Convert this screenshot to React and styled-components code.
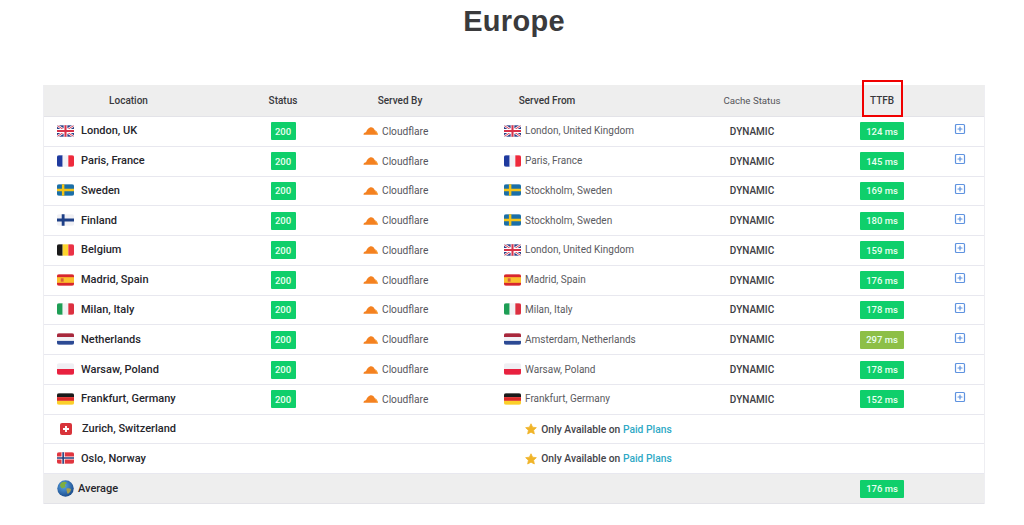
import styled, { createGlobalStyle } from 'styled-components'
import { SquarePlus } from 'lucide-react'

const GlobalStyle = createGlobalStyle`
  html, body { margin: 0; padding: 0; background: #fff; }
  body { font-family: Roboto, "Noto Sans", "Liberation Sans", sans-serif; color: #3c3c40; }
`

const Page = styled.div`
  width: 1024px;
  height: 525px;
  overflow: hidden;
  padding: 0 39px 0 43px;
  box-sizing: border-box;
`

const Title = styled.h1`
  margin: 0;
  height: 85px;
  padding: 3px 0 0 0;
  box-sizing: border-box;
  text-align: center;
  font-family: "Liberation Sans", Arial, sans-serif;
  font-size: 29px;
  line-height: 36px;
  font-weight: 700;
  letter-spacing: 0.3px;
  color: #3a3a3c;
`

const Table = styled.div`
  width: 942px;
  border-left: 1px solid #eeeef2;
  border-right: 1px solid #eeeef2;
  box-sizing: border-box;
`

const Row = styled.div`
  display: grid;
  grid-template-columns: 169px 140px 94px 200px 210px 50px 77px;
  align-items: center;
  height: ${p => p.$h || 29.77}px;
  box-sizing: border-box;
  border-bottom: 1.5px solid ${p => p.$shade ? '#e3e3e8' : '#e8e8ef'};
  background: ${p => p.$shade ? '#eeeeee' : '#fff'};
`

const HeadCell = styled.div`
  position: relative;
  text-align: center;
  font-size: ${p => p.$light ? 9.7 : 10}px;
  font-weight: ${p => p.$light ? 400 : 500};
  color: ${p => p.$light ? '#55555a' : '#38383c'};
`

const Highlight = styled.div`
  position: absolute;
  left: 5px;
  top: -15px;
  width: 41px;
  height: 37px;
  border: 2px solid #f00000;
  box-sizing: border-box;
`

const LocationCell = styled.div`
  display: flex;
  align-items: center;
  gap: ${p => p.$gap || 7}px;
  padding: 0 0 1px ${p => p.$pad || 13}px;
  font-size: 11px;
  font-weight: 500;
  color: #26262c;
  white-space: nowrap;
`

const Centered = styled.div`
  display: flex;
  align-items: center;
  justify-content: center;
`

const Badge = styled.span`
  display: flex;
  align-items: center;
  justify-content: center;
  width: ${p => p.$wide ? 44 : 25}px;
  height: 18px;
  border-radius: 1px;
  background: ${p => p.$slow ? '#8dbf47' : '#0fcf6b'};
  color: #eafff1;
  font-size: 9.5px;
  font-weight: 500;
`

const ServedBy = styled.div`
  display: flex;
  align-items: center;
  gap: 4px;
  padding-left: 10px;
  font-size: 10.2px;
  color: #55555c;
`

const ServedFrom = styled.div`
  display: flex;
  align-items: center;
  gap: 4px;
  padding: 0 0 1px 57px;
  font-size: 10px;
  color: #5a5a60;
  white-space: nowrap;
`

const Cache = styled.div`
  text-align: center;
  font-size: 10px;
  font-weight: 500;
  color: #3c3c42;
`

const Expand = styled.div`
  display: flex;
  justify-content: flex-end;
  padding: 0 18px 4px 0;
  color: #5f93e0;
`

const Notice = styled.div`
  grid-column: 2 / -1;
  display: flex;
  align-items: center;
  justify-content: center;
  gap: 4px;
  font-size: 10.3px;
  font-weight: 500;
  color: #44444a;
`

const PaidLink = styled.a`
  color: #2fa9c6;
`

const Svg = styled.svg`
  flex: none;
  display: block;
  border-radius: 2px;
`

const Flag = ({ children, w = 17, h = 12 }) => (
  <Svg width={w} height={h} viewBox="0 0 18 12">{children}</Svg>
)

const flags = {
  uk: (
    <Flag>
      <rect width="18" height="12" fill="#2b3f86" />
      <path d="M0 0L18 12M18 0L0 12" stroke="#fff" strokeWidth="2.6" />
      <path d="M0 0L18 12M18 0L0 12" stroke="#d8324a" strokeWidth="1" />
      <path d="M9 0V12M0 6H18" stroke="#fff" strokeWidth="4" />
      <path d="M9 0V12M0 6H18" stroke="#d8324a" strokeWidth="2.2" />
    </Flag>
  ),
  fr: (
    <Flag>
      <rect width="6" height="12" fill="#1f3a9e" />
      <rect x="6" width="6" height="12" fill="#f2f2f6" />
      <rect x="12" width="6" height="12" fill="#ee2a3c" />
    </Flag>
  ),
  se: (
    <Flag>
      <rect width="18" height="12" fill="#1b6fa8" />
      <path d="M6.5 0V12M0 6H18" stroke="#f5c518" strokeWidth="2.6" />
    </Flag>
  ),
  fi: (
    <Flag>
      <rect width="18" height="12" fill="#f0f0f4" />
      <path d="M6.5 0V12M0 6H18" stroke="#1d3f86" strokeWidth="3" />
    </Flag>
  ),
  be: (
    <Flag>
      <rect width="6" height="12" fill="#1a1a1a" />
      <rect x="6" width="6" height="12" fill="#fbd52e" />
      <rect x="12" width="6" height="12" fill="#ea3245" />
    </Flag>
  ),
  es: (
    <Flag>
      <rect width="18" height="12" fill="#d8262e" />
      <rect y="3" width="18" height="6" fill="#fbc02d" />
      <rect x="4" y="4.2" width="3" height="3.6" fill="#d9603a" />
    </Flag>
  ),
  it: (
    <Flag>
      <rect width="6" height="12" fill="#1e9e55" />
      <rect x="6" width="6" height="12" fill="#f2f2f4" />
      <rect x="12" width="6" height="12" fill="#dc3040" />
    </Flag>
  ),
  nl: (
    <Flag>
      <rect width="18" height="4" fill="#a8283c" />
      <rect y="4" width="18" height="4" fill="#f2f2f6" />
      <rect y="8" width="18" height="4" fill="#2c4a94" />
    </Flag>
  ),
  pl: (
    <Flag>
      <rect width="18" height="6" fill="#efeff3" />
      <rect y="6" width="18" height="6" fill="#e8213f" />
    </Flag>
  ),
  de: (
    <Flag>
      <rect width="18" height="4" fill="#1a1a1a" />
      <rect y="4" width="18" height="4" fill="#dc2a2a" />
      <rect y="8" width="18" height="4" fill="#fbcf2a" />
    </Flag>
  ),
  ch: (
    <Svg width="12" height="12" viewBox="0 0 12 12">
      <rect width="12" height="12" fill="#d8333a" />
      <path d="M6 3V9M3 6H9" stroke="#fff" strokeWidth="1.9" />
    </Svg>
  ),
  no: (
    <Flag>
      <rect width="18" height="12" fill="#e0353f" />
      <path d="M6.5 0V12M0 6H18" stroke="#fff" strokeWidth="3.4" />
      <path d="M6.5 0V12M0 6H18" stroke="#23407f" strokeWidth="1.7" />
    </Flag>
  ),
}

const Cloud = () => (
  <svg width="15" height="8" viewBox="0 0 30 16">
    <path d="M1 15.500c0-3 2-5 5-5.200C8 6 10 2 14 1c4-1 8 1 9.500 5.500 3.300.4 5.800 4.500 6.200 9H1z" fill="#f48120" />
    <path d="M24 9c2.500 0 4.300 3 5 6.500" stroke="#fbad41" strokeWidth="2" fill="none" />
  </svg>
)

const Star = () => (
  <svg width="12" height="12" viewBox="0 0 24 24">
    <path d="M12 1.500l3.200 6.900 7.500.9-5.500 5.200 1.500 7.500L12 18.300l-6.700 3.700 1.500-7.500L1.300 9.300l7.500-.9z" fill="#f0b429" stroke="#f0b429" strokeWidth="1.500" strokeLinejoin="round" />
  </svg>
)

const Globe = () => (
  <svg width="17" height="17" viewBox="0 0 34 34">
    <defs>
      <radialGradient id="sea" cx="0.4" cy="0.35" r="0.75">
        <stop offset="0" stopColor="#5aa6e8" />
        <stop offset="1" stopColor="#13407f" />
      </radialGradient>
    </defs>
    <circle cx="17" cy="17" r="16.500" fill="url(#sea)" />
    <path d="M9 5c4-2 8-2 10 0 1 2-1 3-3 4-1 2 2 3 1 5-2 2-5 1-6 3-2-1-4-3-5-6 0-2 1-4 3-6z" fill="#7fae3f" />
    <path d="M19 17c3-1 7-1 9 1 0 3-2 7-5 9-2 1-3-1-3-3 0-2-2-4-1-7z" fill="#a6a04a" />
  </svg>
)

const rows = [
  { name: 'London, UK', flag: 'uk', from: 'London, United Kingdom', fromFlag: 'uk', ttfb: 124 },
  { name: 'Paris, France', flag: 'fr', from: 'Paris, France', fromFlag: 'fr', ttfb: 145 },
  { name: 'Sweden', flag: 'se', from: 'Stockholm, Sweden', fromFlag: 'se', ttfb: 169 },
  { name: 'Finland', flag: 'fi', from: 'Stockholm, Sweden', fromFlag: 'se', ttfb: 180 },
  { name: 'Belgium', flag: 'be', from: 'London, United Kingdom', fromFlag: 'uk', ttfb: 159 },
  { name: 'Madrid, Spain', flag: 'es', from: 'Madrid, Spain', fromFlag: 'es', ttfb: 176 },
  { name: 'Milan, Italy', flag: 'it', from: 'Milan, Italy', fromFlag: 'it', ttfb: 178 },
  { name: 'Netherlands', flag: 'nl', from: 'Amsterdam, Netherlands', fromFlag: 'nl', ttfb: 297, slow: true },
  { name: 'Warsaw, Poland', flag: 'pl', from: 'Warsaw, Poland', fromFlag: 'pl', ttfb: 178 },
  { name: 'Frankfurt, Germany', flag: 'de', from: 'Frankfurt, Germany', fromFlag: 'de', ttfb: 152 },
]

const paid = [
  { name: 'Zurich, Switzerland', flag: 'ch', pad: 16, gap: 10 },
  { name: 'Oslo, Norway', flag: 'no' },
]

export default function App() {
  return (
    <Page>
      <GlobalStyle />
      <Title>Europe</Title>
      <Table>
        <Row $shade $h={32}>
          <HeadCell>Location</HeadCell>
          <HeadCell>Status</HeadCell>
          <HeadCell>Served By</HeadCell>
          <HeadCell>Served From</HeadCell>
          <HeadCell $light>Cache Status</HeadCell>
          <HeadCell>TTFB<Highlight /></HeadCell>
          <div />
        </Row>
        {rows.map(r => (
          <Row key={r.name}>
            <LocationCell>{flags[r.flag]}{r.name}</LocationCell>
            <Centered><Badge>200</Badge></Centered>
            <ServedBy><Cloud />Cloudflare</ServedBy>
            <ServedFrom>{flags[r.fromFlag]}{r.from}</ServedFrom>
            <Cache>DYNAMIC</Cache>
            <Centered><Badge $wide $slow={r.slow}>{r.ttfb} ms</Badge></Centered>
            <Expand><SquarePlus size={12} strokeWidth={2.4} /></Expand>
          </Row>
        ))}
        {paid.map(r => (
          <Row key={r.name}>
            <LocationCell $pad={r.pad} $gap={r.gap}>{flags[r.flag]}{r.name}</LocationCell>
            <Notice><Star /><span>Only Available on <PaidLink>Paid Plans</PaidLink></span></Notice>
          </Row>
        ))}
        <Row $shade>
          <LocationCell $gap={4}><Globe />Average</LocationCell>
          <div />
          <div />
          <div />
          <div />
          <Centered><Badge $wide>176 ms</Badge></Centered>
          <div />
        </Row>
      </Table>
    </Page>
  )
}
